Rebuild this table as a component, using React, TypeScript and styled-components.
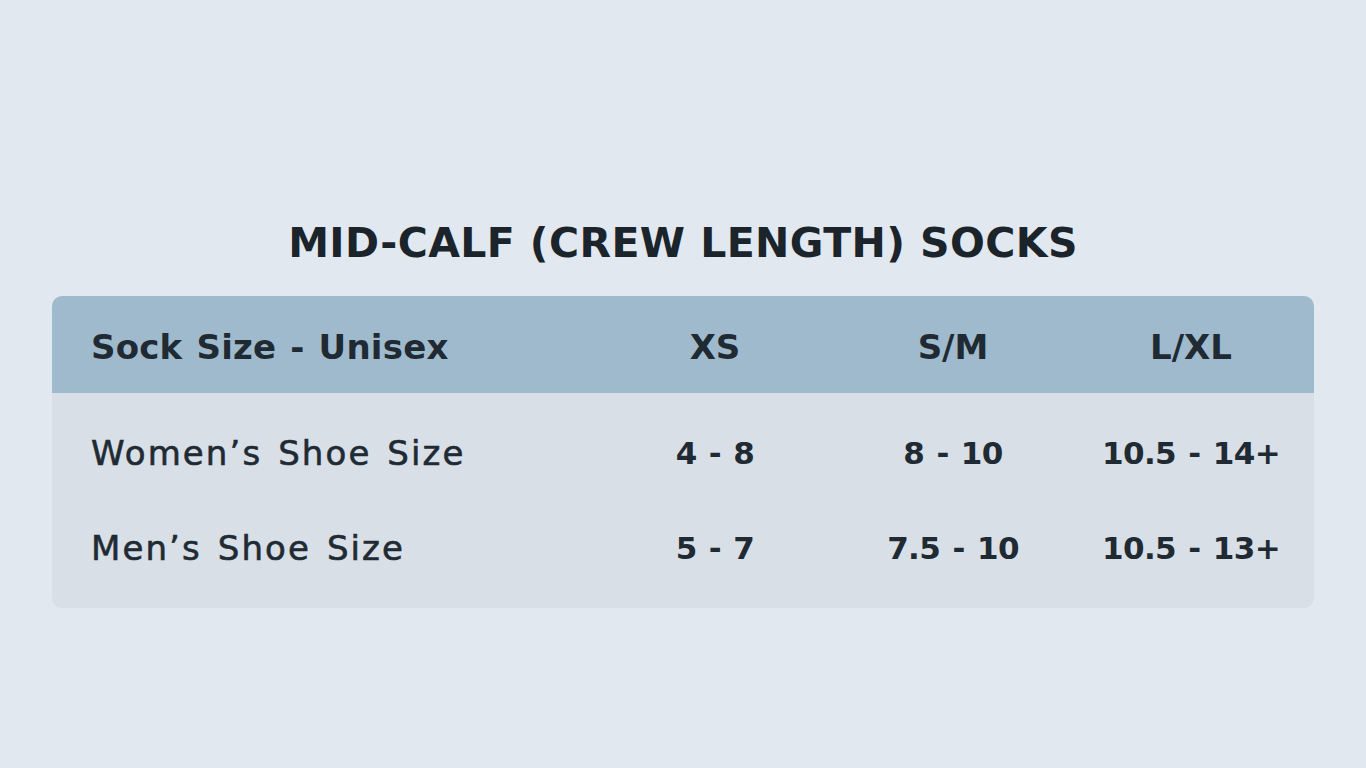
import { createGlobalStyle } from "styled-components"
import styled from "styled-components"

const GlobalStyle = createGlobalStyle`
  html, body {
    margin: 0;
    padding: 0;
    background: #e1e8f0;
  }
  body {
    font-family: "DejaVu Sans", "Noto Sans", sans-serif;
    color: #1e2830;
  }
`

const sizes = ["XS", "S/M", "L/XL"]

const rows = [
  { label: "Women’s Shoe Size", values: ["4 - 8", "8 - 10", "10.5 - 14+"] },
  { label: "Men’s Shoe Size", values: ["5 - 7", "7.5 - 10", "10.5 - 13+"] },
]

export default function App() {
  return (
    <Page>
      <GlobalStyle />
      <Title>MID-CALF (CREW LENGTH) SOCKS</Title>
      <Table>
        <HeadRow>
          <Label $head>Sock Size - Unisex</Label>
          {sizes.map((s) => (
            <Cell key={s} $head>{s}</Cell>
          ))}
        </HeadRow>
        <Body>
          {rows.map((r) => (
            <Row key={r.label}>
              <Label>{r.label}</Label>
              {r.values.map((v, i) => (
                <Cell key={i}>{v}</Cell>
              ))}
            </Row>
          ))}
        </Body>
      </Table>
    </Page>
  )
}

const Page = styled.main`
  width: 1366px;
  height: 768px;
  box-sizing: border-box;
  padding: 218px 52px 0 52px;
  display: flex;
  flex-direction: column;
  align-items: center;
`

const Title = styled.h1`
  margin: 0 0 28px 0;
  height: 50px;
  line-height: 50px;
  font-size: 41px;
  font-weight: 700;
  letter-spacing: 0.4px;
  color: #1b232b;
  text-align: center;
`

const Table = styled.section`
  width: 100%;
  border-radius: 10px;
  overflow: hidden;
  background: #d8dfe7;
`

const HeadRow = styled.div`
  display: grid;
  grid-template-columns: 1fr 238px 238px 238px;
  align-items: center;
  height: 97px;
  box-sizing: border-box;
  padding: 4px 4px 0 39px;
  background: #9fbacd;
`

const Body = styled.div`
  padding: 12px 0 13px 0;
`

const Row = styled.div`
  display: grid;
  grid-template-columns: 1fr 238px 238px 238px;
  align-items: center;
  height: 95px;
  padding: 0 4px 0 39px;
`

const Label = styled.div<{ $head?: boolean }>`
  font-size: 34px;
  font-weight: ${(p) => (p.$head ? 700 : 400)};
  letter-spacing: ${(p) => (p.$head ? "0.2px" : "2.1px")};
  word-spacing: ${(p) => (p.$head ? "2px" : "3px")};
  -webkit-text-stroke: ${(p) => (p.$head ? "0" : "0.6px #1f2a33")};
  color: #1f2a33;
`

const Cell = styled.div<{ $head?: boolean }>`
  text-align: center;
  font-size: ${(p) => (p.$head ? "34px" : "31px")};
  font-weight: 700;
  letter-spacing: ${(p) => (p.$head ? "0" : "-0.6px")};
  word-spacing: ${(p) => (p.$head ? "0" : "2px")};
  color: #1f2a33;
`
